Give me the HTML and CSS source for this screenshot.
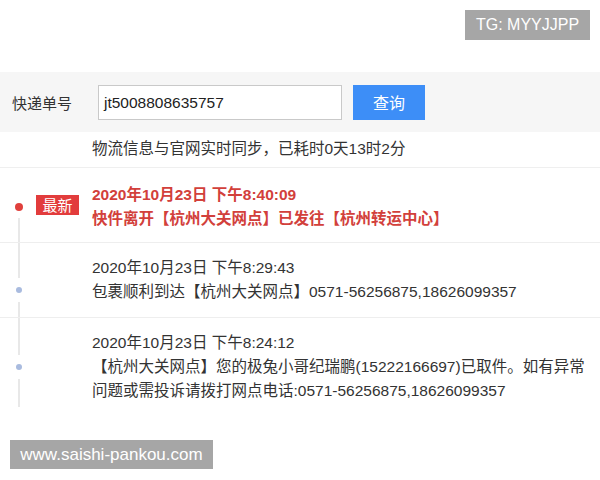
FILE: index.html
```html
<!DOCTYPE html>
<html lang="zh-CN">
<head>
<meta charset="utf-8">
<title>快递查询</title>
<link rel="stylesheet" href="styles.css">
</head>
<body>
<div class="page">
  <div class="top"></div>
  <div class="search">
    <span class="label">快递单号</span>
    <div class="input">jt5008808635757</div>
    <button class="btn">查询</button>
  </div>
  <div class="info">物流信息与官网实时同步，已耗时0天13时2分</div>
  <ul class="timeline">
    <li class="item item-first">
      <div class="side">
        <span class="dot dot-red"></span>
        <span class="badge">最新</span>
      </div>
      <div class="text text-red">
        <p>2020年10月23日 下午8:40:09</p>
        <p>快件离开【杭州大关网点】已发往【杭州转运中心】</p>
      </div>
    </li>
    <li class="item item-mid">
      <div class="side">
        <span class="dot dot-low"></span>
      </div>
      <div class="text">
        <p>2020年10月23日 下午8:29:43</p>
        <p>包裹顺利到达【杭州大关网点】0571-56256875,18626099357</p>
      </div>
    </li>
    <li class="item item-last">
      <div class="side">
        <span class="dot"></span>
      </div>
      <div class="text">
        <p>2020年10月23日 下午8:24:12</p>
        <p>【杭州大关网点】您的极兔小哥纪瑞鹏(15222166697)已取件。如有异常<br>问题或需投诉请拨打网点电话:0571-56256875,18626099357</p>
      </div>
    </li>
  </ul>
  <div class="mark mark-tg">TG: MYYJJPP</div>
  <div class="mark mark-site">www.saishi-pankou.com</div>
</div>
</body>
</html>
```

FILE: styles.css
```css
* { box-sizing: border-box; }
html, body {
  margin: 0;
  padding: 0;
  background: #fff;
}
body {
  font-family: "Liberation Sans", "Noto Sans CJK SC", sans-serif;
  color: #333;
  font-size: 15.5px;
}
.page {
  position: relative;
  width: 600px;
  height: 480px;
  overflow: hidden;
}
.top { height: 72px; }
.search {
  height: 60px;
  background: #f6f6f6;
  display: flex;
  align-items: center;
  padding-left: 12px;
}
.label {
  width: 86px;
  font-size: 15px;
  color: #333;
}
.input {
  width: 244px;
  height: 35px;
  border: 1px solid #c9c9c9;
  background: #fff;
  line-height: 33px;
  padding-left: 5px;
  font-size: 15.5px;
  color: #222;
}
.btn {
  margin-left: 11px;
  width: 72px;
  height: 35px;
  border: 0;
  background: #3d8ef7;
  color: #fff;
  font-family: "Noto Sans CJK SC", sans-serif;
  font-size: 16px;
  padding: 0;
}
.info {
  height: 36px;
  line-height: 33px;
  padding-left: 92px;
  border-bottom: 1px solid #efefef;
  color: #333;
}
.timeline {
  list-style: none;
  margin: 0;
  padding: 0;
}
.item {
  display: flex;
  position: relative;
  border-bottom: 1px solid #eeeeee;
  padding: 13px 0;
}
.item-first { padding: 15px 0 11px; }
.item-last { border-bottom: 0; padding-bottom: 4px; }
.item::before {
  content: "";
  position: absolute;
  left: 18px;
  top: 0;
  bottom: 0;
  width: 2px;
  background: #e8e8e8;
}
.item-first::before { top: 50px; }
.side {
  width: 92px;
  flex: none;
  display: flex;
  align-items: center;
  position: relative;
}
.dot {
  width: 6px;
  height: 6px;
  border-radius: 50%;
  background: #a9bbdf;
  margin-left: 16px;
  position: relative;
  z-index: 1;
  box-shadow: 0 0 0 9px #fff;
}
.dot-red {
  width: 8px;
  height: 8px;
  margin-left: 15px;
  background: #e0403c;
  box-shadow: 0 0 0 0 #fff;
  margin-top: 0;
}
.dot-low { margin-top: 20px; }
.badge {
  margin-left: 13px;
  width: 43px;
  height: 20px;
  background: #e23c3c;
  color: #fff;
  font-family: "Noto Sans CJK SC", sans-serif;
  font-size: 15px;
  line-height: 20px;
  text-align: center;
  margin-top: -5px;
}
.text p {
  margin: 0;
  line-height: 24px;
  white-space: nowrap;
}
.text-red {
  color: #d2403b;
  font-weight: bold;
}
.mark {
  position: absolute;
  background: #a6a6a6;
  color: #fff;
  font-family: "Liberation Sans", sans-serif;
}
.mark-tg {
  left: 465px;
  top: 10px;
  width: 125px;
  height: 30px;
  line-height: 30px;
  text-align: center;
  font-size: 16px;
}
.mark-site {
  left: 10px;
  top: 440px;
  width: 203px;
  height: 29px;
  line-height: 29px;
  text-align: center;
  font-size: 17px;
}
```
